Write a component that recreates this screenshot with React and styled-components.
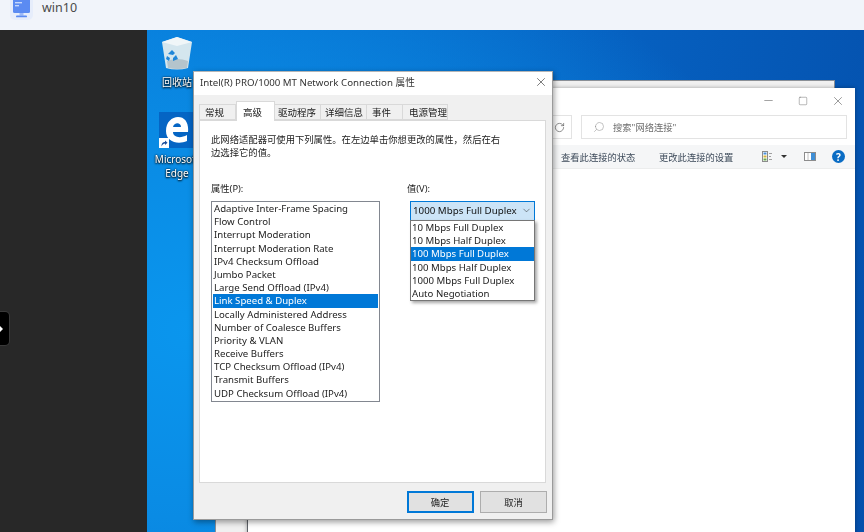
import styled, { createGlobalStyle } from 'styled-components';
import { ChevronDown, Minus, RotateCw, Search, Square, X } from 'lucide-react';

const FONT = `'Noto Sans', 'Noto Sans CJK SC', sans-serif`;

const properties = [
  'Adaptive Inter-Frame Spacing',
  'Flow Control',
  'Interrupt Moderation',
  'Interrupt Moderation Rate',
  'IPv4 Checksum Offload',
  'Jumbo Packet',
  'Large Send Offload (IPv4)',
  'Link Speed & Duplex',
  'Locally Administered Address',
  'Number of Coalesce Buffers',
  'Priority & VLAN',
  'Receive Buffers',
  'TCP Checksum Offload (IPv4)',
  'Transmit Buffers',
  'UDP Checksum Offload (IPv4)'
];

const speeds = [
  '10 Mbps Full Duplex',
  '10 Mbps Half Duplex',
  '100 Mbps Full Duplex',
  '100 Mbps Half Duplex',
  '1000 Mbps Full Duplex',
  'Auto Negotiation'
];

const tabs = [
  { title: '常规', width: 37, inset: 5 },
  { title: '高级', width: 39, inset: 6, active: true },
  { title: '驱动程序', width: 46, inset: 3 },
  { title: '详细信息', width: 46, inset: 4 },
  { title: '事件', width: 36, inset: 5 },
  { title: '电源管理', width: 45, inset: 6 }
];

const MonitorIcon = () => (
  <svg width='23' height='20' viewBox='0 0 23 20'>
    <rect x='0' y='-4' width='23' height='24' rx='5' fill='#e6edfb' />
    <rect x='3' y='-2' width='17' height='15' rx='1.5' fill='#5b8bf2' />
    <rect x='5' y='2' width='7' height='1.4' fill='#c6d8fc' />
    <rect x='5' y='5' width='4' height='1.4' fill='#c6d8fc' />
    <path d='M9.5 13h4v2.5h-4z' fill='#9db9f7' />
    <rect x='6' y='15.5' width='11' height='1.8' rx='0.9' fill='#5b8bf2' />
  </svg>
);

const RecycleBin = () => (
  <svg width='32' height='34' viewBox='0 0 32 34'>
    <path d='M1 6 L16 1 L31 6 L27 32 Q16 35 5 32 Z' fill='#d4e6ee' />
    <path d='M1 6 L16 1 L31 6 L16 10 Z' fill='#f0f6f8' />
    <path d='M6 25 Q16 21 27 25 L26 32 Q16 34 7 32 Z' fill='#b4c4cc' />
    <path
      transform='translate(-5 2)'
      d='M12 16 l4 -4 l3 3 l-2 2 z M20 17 l2 4 l-5 2 l0 -3 z M11 18 l3 2 l-1 3 l-3 -2 z'
      fill='#1f86d8'
    />
  </svg>
);

const EdgeLogo = () => (
  <svg width='24' height='26' viewBox='0 0 24 26'>
    <path
      d='M1 14 C1 5 7 0 13 0 C20 0 24 6 23 15 L8 15 C8 20 15 22 22 18 L22 24 C13 28 1 25 1 14 Z M8 10 L16 10 C16 5 9 5 8 10 Z'
      fill='#fff'
      fillRule='evenodd'
    />
  </svg>
);

const ShortcutArrow = () => (
  <svg width='10' height='10' viewBox='0 0 10 10'>
    <rect width='10' height='10' fill='#fff' />
    <path d='M2.5 8.5 C2.5 5 4 4 6 4 L6 2.5 L8.5 4.8 L6 7 L6 5.6 C4.6 5.6 3.6 6.4 2.5 8.5 Z' fill='#1d4f9c' />
  </svg>
);

const ViewIcon = () => (
  <svg width='10' height='11' viewBox='0 0 10 11'>
    <rect x='0.5' y='0.5' width='5' height='10' fill='#fff' stroke='#8c8c8c' />
    <rect x='1.5' y='1.5' width='3' height='2' fill='#4a90d9' />
    <rect x='1.5' y='4.5' width='3' height='2' fill='#d8b23c' />
    <rect x='1.5' y='7.5' width='3' height='2' fill='#6aa84f' />
    <path d='M7 2.5h3M7 5.5h2M7 8.5h3' stroke='#a0a0a0' />
  </svg>
);

const PaneIcon = () => (
  <svg width='12' height='9' viewBox='0 0 12 9'>
    <rect x='0.5' y='0.5' width='11' height='8' fill='#fff' stroke='#8c8c8c' />
    <rect x='7' y='1' width='4' height='7' fill='#3f8fd6' />
    <path d='M4 1v7' stroke='#c0c0c0' />
  </svg>
);

const App = () => (
  <>
    <GlobalStyle />
    <Page>
      <TopBar>
        <MonitorIcon />
        <HostName>win10</HostName>
      </TopBar>
      <Main>
        <SidePanel>
          <Handle>
            <HandleArrow />
          </Handle>
        </SidePanel>
        <Desktop>
          <DesktopIcon $top={6}>
            <RecycleBin />
            <IconLabel>回收站</IconLabel>
          </DesktopIcon>
          <DesktopIcon $top={82}>
            <EdgeTile>
              <EdgeLogo />
              <ShortcutBadge>
                <ShortcutArrow />
              </ShortcutBadge>
            </EdgeTile>
            <IconLabel>
              Microsoft
              <br />
              Edge
            </IconLabel>
          </DesktopIcon>

          <BackWindow />
          <Explorer>
            <Caption>
              <Minus size={13} strokeWidth={1} />
              <Square size={10} strokeWidth={1} />
              <X size={14} strokeWidth={1} />
            </Caption>
            <AddressRow>
              <RefreshBox>
                <RotateCw size={11} strokeWidth={1.4} />
              </RefreshBox>
              <SearchBox>
                <FlippedSearch size={12} strokeWidth={1} />
                搜索"网络连接"
              </SearchBox>
            </AddressRow>
            <CommandBar>
              <Command $width={98}>查看此连接的状态</Command>
              <Command $width={103}>更改此连接的设置</Command>
              <ViewIcon />
              <Caret />
              <PaneIcon />
              <HelpButton>?</HelpButton>
            </CommandBar>
          </Explorer>

          <Dialog>
            <TitleBar>
              <span>Intel(R) PRO/1000 MT Network Connection 属性</span>
              <X size={14} strokeWidth={1.1} />
            </TitleBar>
            <Body>
              <TabRow>
                {tabs.map(({ title, width, inset, active }) => (
                  <Tab key={title} $width={width} $inset={inset} $active={active}>
                    {title}
                  </Tab>
                ))}
              </TabRow>
              <TabPanel>
                <Description>
                  此网络适配器可使用下列属性。在左边单击你想更改的属性，然后在右
                  <br />
                  边选择它的值。
                </Description>
                <Fields>
                  <div>
                    <FieldLabel>属性(P):</FieldLabel>
                    <PropertyList>
                      {properties.map(name => (
                        <Row key={name} $selected={name === 'Link Speed & Duplex'}>
                          {name}
                        </Row>
                      ))}
                    </PropertyList>
                  </div>
                  <ValueColumn>
                    <FieldLabel $outdent={3}>值(V):</FieldLabel>
                    <Select>
                      1000 Mbps Full Duplex
                      <ChevronDown size={11} strokeWidth={1} />
                    </Select>
                    <Dropdown>
                      {speeds.map(speed => (
                        <Row key={speed} $selected={speed === '100 Mbps Full Duplex'}>
                          {speed}
                        </Row>
                      ))}
                    </Dropdown>
                  </ValueColumn>
                </Fields>
              </TabPanel>
              <Actions>
                <Button $primary>确定</Button>
                <Button>取消</Button>
              </Actions>
            </Body>
          </Dialog>
        </Desktop>
      </Main>
    </Page>
  </>
);

export default App;

const GlobalStyle = createGlobalStyle`
  html, body {
    margin: 0;
    padding: 0;
    height: 100%;
    overflow: hidden;
  }
  * {
    box-sizing: border-box;
  }
`;

const Page = styled.div`
  width: 864px;
  height: 532px;
  display: flex;
  flex-direction: column;
  font-family: ${FONT};
  overflow: hidden;
`;

const TopBar = styled.header`
  height: 30px;
  flex: none;
  display: flex;
  align-items: flex-start;
  gap: 9px;
  padding-left: 10px;
  background: #f1f4fa;
  overflow: hidden;
`;

const HostName = styled.span`
  font-size: 12.5px;
  line-height: 16px;
  color: #4a4a4a;
`;

const Main = styled.main`
  flex: 1;
  display: flex;
  min-height: 0;
`;

const SidePanel = styled.aside`
  position: relative;
  width: 147px;
  flex: none;
  background: #282828;
`;

const Handle = styled.div`
  position: absolute;
  left: -3px;
  top: 282px;
  width: 12px;
  height: 33px;
  display: flex;
  align-items: center;
  justify-content: flex-end;
  padding-right: 6px;
  background: #000;
  border-radius: 0 4px 4px 0;
  box-shadow: 0 0 0 1px #3a3a3a;
`;

const HandleArrow = styled.i`
  width: 0;
  height: 0;
  border-left: 3px solid #fff;
  border-top: 3px solid transparent;
  border-bottom: 3px solid transparent;
`;

const Desktop = styled.section`
  position: relative;
  flex: 1;
  overflow: hidden;
  filter: blur(0.3px);
  background:
    radial-gradient(ellipse 620px 420px at 50px 300px, #0a96ee 0%, #0a8be4 45%, rgba(10, 120, 220, 0) 100%),
    linear-gradient(100deg, #0878d8 0%, #0660c0 60%, #0450ac 100%);
`;

const DesktopIcon = styled.div`
  position: absolute;
  left: 0;
  top: ${({ $top }) => $top}px;
  width: 60px;
  display: flex;
  flex-direction: column;
  align-items: center;
`;

const IconLabel = styled.div`
  margin-top: 5px;
  text-align: center;
  font-size: 10px;
  line-height: 14px;
  color: #fff;
  text-shadow: 0 0 2px #000, 0 1px 2px #000;
  white-space: nowrap;
`;

const EdgeTile = styled.div`
  position: relative;
  width: 36px;
  height: 36px;
  margin-bottom: -1px;
  display: flex;
  align-items: center;
  justify-content: center;
  background: #0565c4;
`;

const ShortcutBadge = styled.div`
  position: absolute;
  left: 0;
  bottom: 0;
  display: flex;
`;

const BackWindow = styled.div`
  position: absolute;
  left: 68px;
  top: 50px;
  width: 620px;
  height: 480px;
  background: #f0f0f0;
  border: 1px solid #8a8f96;
  border-bottom: 0;
`;

const Explorer = styled.div`
  position: absolute;
  left: 100px;
  top: 58px;
  width: 608px;
  height: 460px;
  background: #fff;
  border-left: 1px solid #5c6066;
  box-shadow: 0 0 4px rgba(0, 0, 0, 0.35);
  display: flex;
  flex-direction: column;
`;

const Caption = styled.div`
  height: 25px;
  flex: none;
  display: flex;
  align-items: center;
  justify-content: flex-end;
  gap: 23px;
  padding-right: 10px;
  color: #555;
`;

const AddressRow = styled.div`
  height: 32px;
  flex: none;
  display: flex;
  justify-content: flex-end;
  gap: 9px;
  padding: 2px 8px 6px 0;
`;

const RefreshBox = styled.div`
  width: 25px;
  display: flex;
  align-items: center;
  justify-content: center;
  border: 1px solid #e3e3e3;
  border-left: 0;
  color: #555;
`;

const SearchBox = styled.div`
  width: 266px;
  display: flex;
  align-items: center;
  gap: 8px;
  padding-left: 11px;
  border: 1px solid #e3e3e3;
  font-size: 9.3px;
  color: #6d6d6d;
`;

const FlippedSearch = styled(Search)`
  transform: scaleX(-1);
  color: #888;
`;

const CommandBar = styled.div`
  height: 24px;
  flex: none;
  display: flex;
  align-items: center;
  padding-left: 313px;
  background: #f5f6f7;
  border-bottom: 1px solid #eceded;
`;

const Command = styled.span`
  width: ${({ $width }) => $width}px;
  font-size: 9.3px;
  color: #3d4a5a;
  white-space: nowrap;
`;

const Caret = styled.i`
  width: 0;
  height: 0;
  margin: 0 17px 0 9px;
  border-top: 3px solid #333;
  border-left: 3px solid transparent;
  border-right: 3px solid transparent;
`;

const HelpButton = styled.span`
  width: 13px;
  height: 13px;
  margin-left: 16px;
  display: flex;
  align-items: center;
  justify-content: center;
  border-radius: 50%;
  background: #0a6cc4;
  color: #fff;
  font-size: 10px;
  font-weight: 700;
`;

const Dialog = styled.div`
  position: absolute;
  left: 46px;
  top: 41px;
  width: 360px;
  height: 449px;
  display: flex;
  flex-direction: column;
  background: #f0f0f0;
  border: 1px solid #9a9a9a;
  border-top-color: #b5b5b5;
  box-shadow: 1px 2px 6px rgba(0, 0, 0, 0.4);
`;

const TitleBar = styled.div`
  height: 23px;
  flex: none;
  display: flex;
  align-items: center;
  justify-content: space-between;
  padding: 0 4px 3px 6px;
  background: #fff;
  font-size: 9.7px;
  color: #333;
  white-space: nowrap;
`;

const Body = styled.div`
  flex: 1;
  display: flex;
  flex-direction: column;
  padding: 6px 6px 0 5px;
`;

const TabRow = styled.div`
  height: 19px;
  flex: none;
  display: flex;
  align-items: flex-end;
  position: relative;
  z-index: 1;
`;

const Tab = styled.div`
  width: ${({ $width }) => $width}px;
  height: ${({ $active }) => ($active ? '20px' : '16px')};
  margin-bottom: ${({ $active }) => ($active ? '-1px' : '0')};
  padding-left: ${({ $inset }) => $inset}px;
  display: flex;
  align-items: center;
  background: ${({ $active }) => ($active ? '#fff' : '#f0f0f0')};
  border: 1px solid #d9d9d9;
  border-left-width: ${({ $active }) => ($active ? '1px' : '0')};
  border-bottom: ${({ $active }) => ($active ? '0' : '1px solid #d9d9d9')};
  font-size: 9.5px;
  color: #222;

  &:first-child {
    border-left-width: 1px;
  }
`;

const TabPanel = styled.div`
  height: 363px;
  flex: none;
  padding: 12px 11px 0 11px;
  background: #fff;
  border: 1px solid #d9d9d9;
`;

const Description = styled.p`
  margin: 0;
  font-size: 9.33px;
  line-height: 13px;
  color: #222;
`;

const Fields = styled.div`
  display: grid;
  grid-template-columns: 169px 125px;
  column-gap: 30px;
  margin-top: 24px;
`;

const FieldLabel = styled.div`
  height: 18px;
  margin-left: ${({ $outdent = 0 }) => -$outdent}px;
  font-size: 9.3px;
  line-height: 12px;
  color: #222;
`;

const PropertyList = styled.div`
  height: 201px;
  padding: 0 1px;
  background: #fff;
  border: 1px solid #828790;
`;

const Row = styled.div`
  height: 13.2px;
  padding-left: 1px;
  font-size: 9.65px;
  line-height: 14px;
  white-space: nowrap;
  color: ${({ $selected }) => ($selected ? '#fff' : '#222')};
  background: ${({ $selected }) => ($selected ? '#0078d7' : 'transparent')};
`;

const ValueColumn = styled.div`
  position: relative;
`;

const Select = styled.div`
  height: 20px;
  display: flex;
  align-items: center;
  justify-content: space-between;
  padding: 0 2px 1px 2px;
  background: #cce4f7;
  border: 1px solid #0078d7;
  font-size: 9.75px;
  color: #111;
  white-space: nowrap;
`;

const Dropdown = styled.div`
  position: absolute;
  left: 0;
  top: 37px;
  width: 125px;
  height: 81px;
  padding: 0;
  background: #fff;
  border: 1px solid #767676;
  box-shadow: 2px 2px 3px rgba(0, 0, 0, 0.35);
`;

const Actions = styled.div`
  flex: 1;
  display: flex;
  justify-content: flex-end;
  gap: 6.5px;
  padding-top: 8px;
  margin-right: -1px;
`;

const Button = styled.div`
  width: 67px;
  height: 22px;
  display: flex;
  align-items: center;
  justify-content: center;
  background: #e1e1e1;
  border: ${({ $primary }) => ($primary ? '2px solid #0078d7' : '1px solid #adadad')};
  font-size: 9.3px;
  color: #222;
`;
